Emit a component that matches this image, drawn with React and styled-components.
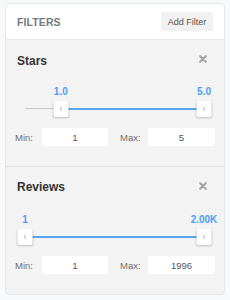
import React from 'react';
import styled, { createGlobalStyle } from 'styled-components';

const Global = createGlobalStyle`
  body {
    margin: 0;
    background: #f8f9fa;
    font-family: "Liberation Sans", Arial, sans-serif;
  }
`;

const Card = styled.div`
  margin: 3px 0 0 5px;
  width: 218px;
  border: 1px solid #e4e6e8;
  border-radius: 4px;
  overflow: hidden;
  background: #f3f3f3;
`;

const Header = styled.div`
  height: 35px;
  background: #fff;
  border-bottom: 1px solid #e6e6e6;
  display: flex;
  align-items: center;
  justify-content: space-between;
  padding: 0 11px 0 11px;
`;

const Title = styled.div`
  font-size: 10.5px;
  font-weight: bold;
  color: #737b82;
  letter-spacing: 0.1px;
`;

const AddButton = styled.button`
  border: none;
  background: #f1f1f1;
  border-radius: 2px;
  height: 19px;
  width: 52px;
  padding: 0;
  font-family: inherit;
  font-size: 9px;
  color: #555;
`;

const Section = styled.div`
  padding: ${(p) => (p.$first ? '13px' : '12px')} 9px 20px 11px;
  border-top: ${(p) => (p.$first ? 'none' : '1px solid #e2e2e2')};
`;

const SectionHead = styled.div`
  display: flex;
  align-items: center;
  justify-content: space-between;
  height: 16px;
`;

const SectionTitle = styled.div`
  font-size: 12px;
  font-weight: bold;
  color: #333;
`;

const Close = styled.svg`
  width: 8px;
  height: 8px;
  margin-right: 8px;
  margin-top: ${(p) => p.$dy || 0}px;
`;

const Values = styled.div`
  position: relative;
  margin: ${(p) => p.$mt}px 0 0 8px;
  width: 179px;
  height: 13px;
`;

const Value = styled.span`
  position: absolute;
  top: 0;
  transform: translateX(-50%);
  font-size: 10px;
  font-weight: bold;
  color: #4d9ef6;
  line-height: 13px;
  white-space: nowrap;
`;

const Track = styled.div`
  position: relative;
  margin: 3px 0 0 8px;
  width: 179px;
  height: 16px;
`;

const Rail = styled.div`
  position: absolute;
  left: 0;
  right: 0;
  top: 7px;
  height: 1px;
  background: #c8c8c8;
`;

const Fill = styled.div`
  position: absolute;
  top: 7px;
  height: 2px;
  background: #5aa6f0;
`;

const Handle = styled.div`
  position: absolute;
  top: 0;
  width: 15px;
  height: 16px;
  transform: translateX(-50%);
  background: #fff;
  border-radius: 2px;
  box-shadow: 0 1px 2px rgba(0, 0, 0, 0.22);
  display: flex;
  align-items: center;
  justify-content: center;
  &::after {
    content: '';
    width: 1px;
    height: 4px;
    background: #b5b5b5;
  }
`;

const InputRow = styled.div`
  display: flex;
  align-items: center;
  margin: 11px 0 0 -2px;
`;

const Label = styled.span`
  width: ${(p) => p.$w}px;
  font-size: 9.5px;
  color: #707070;
`;

const Box = styled.div`
  width: ${(p) => p.$w}px;
  height: 18px;
  background: #fff;
  display: flex;
  align-items: center;
  justify-content: center;
  font-size: 9.5px;
  color: #555;
  margin-right: ${(p) => p.$mr || 0}px;
`;

const XIcon = ({ dy }) => (
  <Close viewBox="0 0 10 10" $dy={dy}>
    <path d="M1.5 1.5L8.5 8.5M8.5 1.5L1.5 8.5" stroke="#a3a3a3" strokeWidth="2.6" strokeLinecap="round" />
  </Close>
);

const RangeFilter = ({ first, title, lo, hi, loLabel, hiLabel, min, max, valueTop, xdy }) => {
  const a = (lo / max) * 100;
  const b = (hi / max) * 100;
  return (
    <Section $first={first}>
      <SectionHead>
        <SectionTitle>{title}</SectionTitle>
        <XIcon dy={xdy} />
      </SectionHead>
      <Values $mt={valueTop}>
        <Value style={{ left: `${a}%` }}>{loLabel}</Value>
        <Value style={{ left: `${b}%` }}>{hiLabel}</Value>
      </Values>
      <Track>
        <Rail />
        <Fill style={{ left: `${a}%`, width: `${b - a}%` }} />
        <Handle style={{ left: `${a}%` }} />
        <Handle style={{ left: `${b}%` }} />
      </Track>
      <InputRow>
        <Label $w={27}>Min:</Label>
        <Box $w={66} $mr={12}>{min}</Box>
        <Label $w={28}>Max:</Label>
        <Box $w={67}>{max}</Box>
      </InputRow>
    </Section>
  );
};

export default function App() {
  return (
    <>
      <Global />
      <Card>
        <Header>
          <Title>FILTERS</Title>
          <AddButton>Add Filter</AddButton>
        </Header>
        <RangeFilter first title="Stars" lo={1} hi={5} loLabel="1.0" hiLabel="5.0" min={1} max={5} valueTop={16} xdy={-4} />
        <RangeFilter title="Reviews" lo={0} hi={1996} loLabel="1" hiLabel="2.00K" min={1} max={1996} valueTop={18} xdy={-3} />
      </Card>
    </>
  );
}
